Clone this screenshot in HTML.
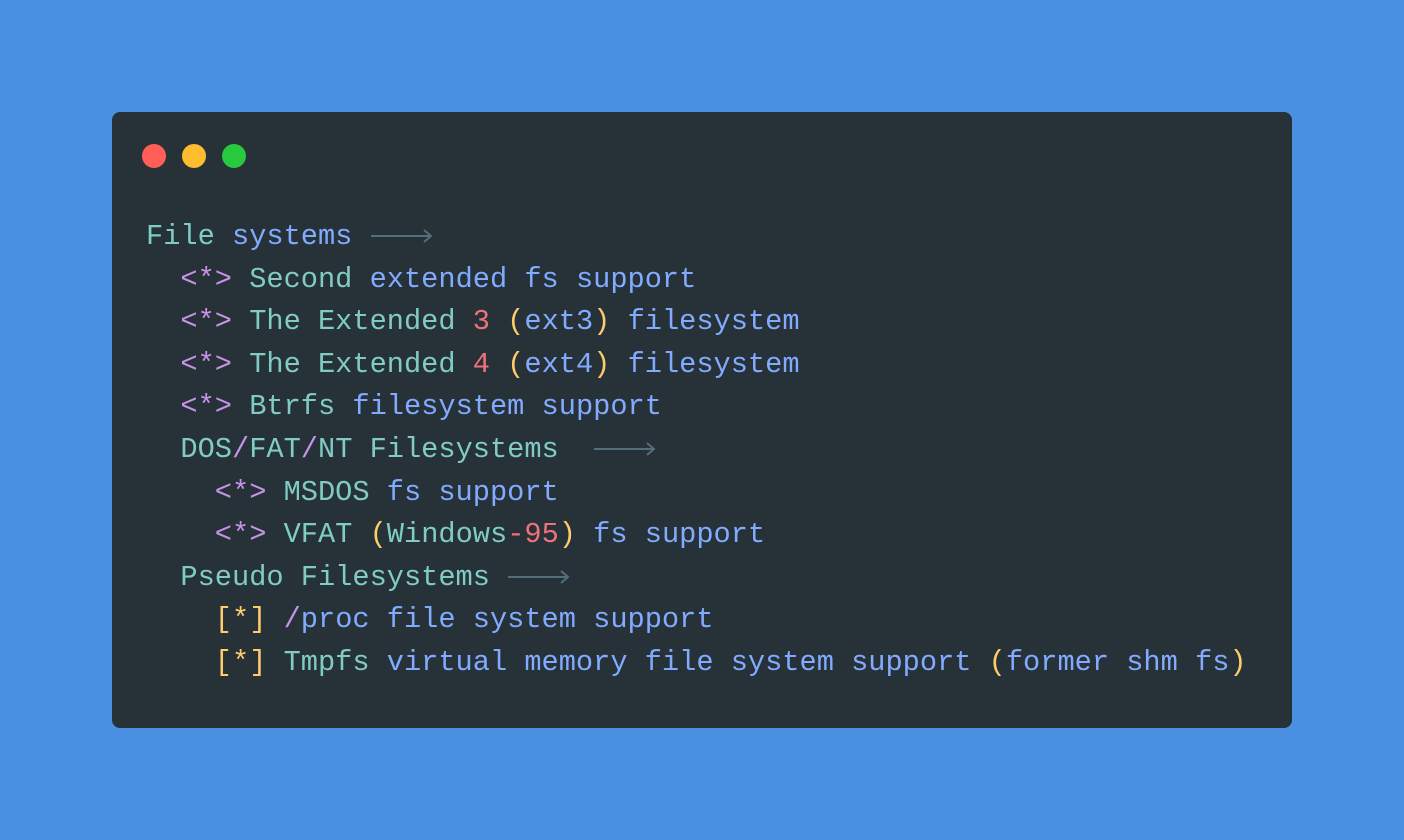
<!DOCTYPE html>
<html><head><meta charset="utf-8"><style>
html,body{margin:0;padding:0}
body{width:1404px;height:840px;background:#4a90e2;position:relative;overflow:hidden}
.win{position:absolute;left:112px;top:112px;width:1180px;height:616px;background:#263238;border-radius:8px}
.dot{position:absolute;top:144px;width:24px;height:24px;border-radius:50%}
.code{position:absolute;left:146px;top:216px;font-family:"Liberation Mono",monospace;font-size:28.67px;line-height:42.6px;white-space:pre;color:#82aaff}
.t{color:#80cbc4}.p{color:#c792ea}.r{color:#f07178}.y{color:#ffcb6b}
svg{vertical-align:middle}
</style></head><body>
<div class="win"></div>
<div class="dot" style="left:142px;background:#ff5f56"></div>
<div class="dot" style="left:182px;background:#ffbd2e"></div>
<div class="dot" style="left:222px;background:#27c93f"></div>
<div class="code"><span class="t">File</span> systems <svg width="64" height="14" viewBox="0 0 64 14"><path d="M1 7H61M54 1L61 7L54 13" stroke="#546e7a" stroke-width="2" fill="none"/></svg>
  <span class="p">&lt;*&gt;</span> <span class="t">Second</span> extended fs support
  <span class="p">&lt;*&gt;</span> <span class="t">The Extended</span> <span class="r">3</span> <span class="y">(</span>ext3<span class="y">)</span> filesystem
  <span class="p">&lt;*&gt;</span> <span class="t">The Extended</span> <span class="r">4</span> <span class="y">(</span>ext4<span class="y">)</span> filesystem
  <span class="p">&lt;*&gt;</span> <span class="t">Btrfs</span> filesystem support
  <span class="t">DOS</span><span class="p">/</span><span class="t">FAT</span><span class="p">/</span><span class="t">NT Filesystems</span>  <svg width="64" height="14" viewBox="0 0 64 14"><path d="M1 7H61M54 1L61 7L54 13" stroke="#546e7a" stroke-width="2" fill="none"/></svg>
    <span class="p">&lt;*&gt;</span> <span class="t">MSDOS</span> fs support
    <span class="p">&lt;*&gt;</span> <span class="t">VFAT</span> <span class="y">(</span><span class="t">Windows</span><span class="r">-95</span><span class="y">)</span> fs support
  <span class="t">Pseudo Filesystems</span> <svg width="64" height="14" viewBox="0 0 64 14"><path d="M1 7H61M54 1L61 7L54 13" stroke="#546e7a" stroke-width="2" fill="none"/></svg>
    <span class="y">[*]</span> <span class="p">/</span>proc file system support
    <span class="y">[*]</span> <span class="t">Tmpfs</span> virtual memory file system support <span class="y">(</span>former shm fs<span class="y">)</span></div>
</body></html>
